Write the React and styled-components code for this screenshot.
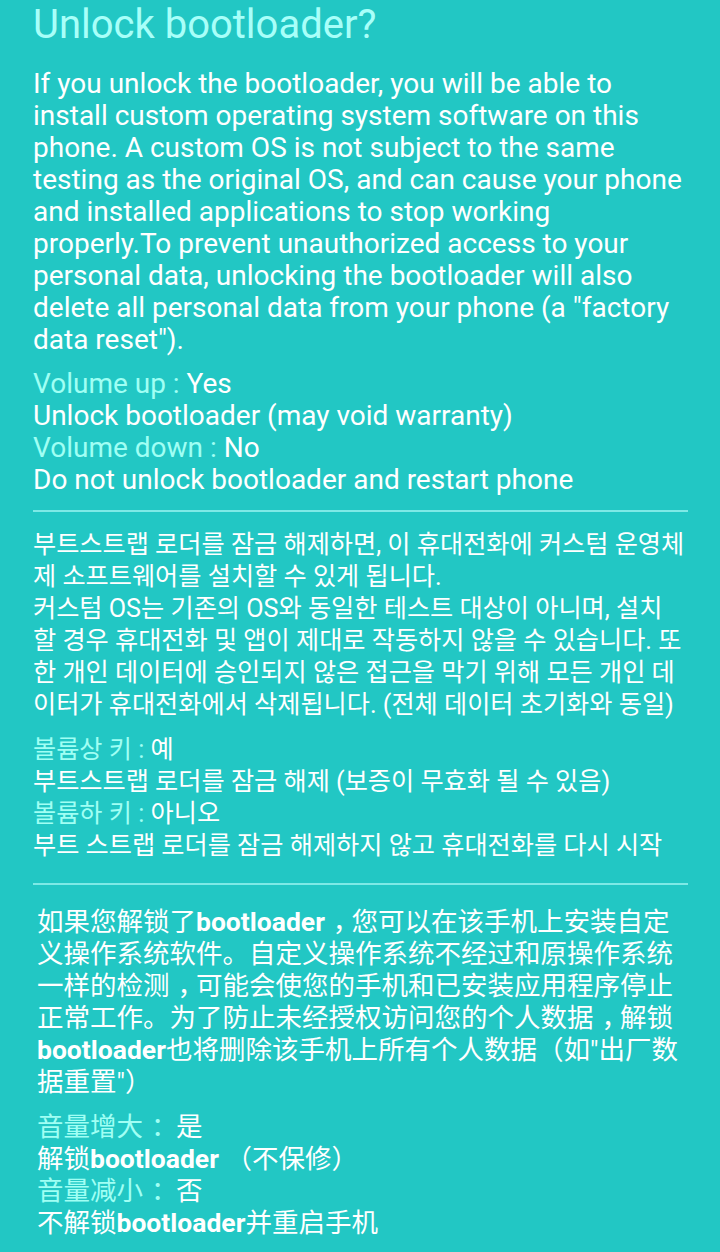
import React from "react";
import styled, { createGlobalStyle } from "styled-components";

const Global = createGlobalStyle`
  html, body { margin: 0; padding: 0; background: #22c7c4; }
  body { font-family: Roboto, "Noto Sans", sans-serif; }
`;

const Page = styled.div`
  width: 720px;
  min-height: 1252px;
  box-sizing: border-box;
  background: #22c7c4;
  padding: 0 32px 0 33px;
  color: #ffffff;
  display: flex;
  flex-direction: column;
`;

const Title = styled.h1`
  margin: 0;
  font-family: Roboto, sans-serif;
  font-weight: 400;
  font-size: 40px;
  line-height: 50px;
  color: #a8fff9;
`;

const Section = styled.section`
  display: flex;
  flex-direction: column;
  padding-top: ${(p) => p.$top || 0}px;
  padding-bottom: ${(p) => p.$bottom || 0}px;
  padding-left: ${(p) => p.$indent || 0}px;
`;

const Paragraph = styled.p`
  margin: 0;
  font-family: ${(p) => p.$font};
  font-size: ${(p) => p.$size}px;
  line-height: 32px;
  color: #ffffff;
  white-space: nowrap;
`;

const Options = styled.div`
  display: flex;
  flex-direction: column;
  margin-top: ${(p) => p.$gap}px;
  font-family: ${(p) => p.$font};
  font-size: ${(p) => p.$size}px;
  line-height: 32px;
  white-space: nowrap;
`;

const Line = styled.div``;

const Label = styled.span`
  color: #a0fff4;
`;

const Bold = styled.b`
  font-family: Roboto, sans-serif;
  font-weight: 700;
`;

/* full-width punctuation centred in its cell, as on the device */
const Punct = styled.span`
  padding-left: 0.3em;
  letter-spacing: -0.3em;
`;

const Divider = styled.hr`
  margin: 0;
  border: none;
  height: 2px;
  background: #7ee9e6;
  width: 655px;
`;

const EN = `Roboto, "Noto Sans", sans-serif`;
const KR = `Roboto, "Noto Sans CJK KR", sans-serif`;
const SC = `Roboto, "Noto Sans CJK SC", sans-serif`;

export default function App() {
  return (
    <>
      <Global />
      <Page>
        <Title>Unlock bootloader?</Title>
        <Section $top={18} $bottom={14}>
          <Paragraph $font={EN} $size={28}>
            If you unlock the bootloader, you will be able to<br />
            install custom operating system software on this<br />
            phone. A custom OS is not subject to the same<br />
            testing as the original OS, and can cause your phone<br />
            and installed applications to stop working<br />
            properly.To prevent unauthorized access to your<br />
            personal data, unlocking the bootloader will also<br />
            delete all personal data from your phone (a "factory<br />
            data reset").
          </Paragraph>
          <Options $gap={12} $font={EN} $size={28}>
            <Line><Label>Volume up : </Label>Yes</Line>
            <Line>Unlock bootloader (may void warranty)</Line>
            <Line><Label>Volume down : </Label>No</Line>
            <Line>Do not unlock bootloader and restart phone</Line>
          </Options>
        </Section>
        <Divider />
        <Section $top={17} $bottom={21}>
          <Paragraph $font={KR} $size={25.2}>
            부트스트랩 로더를 잠금 해제하면, 이 휴대전화에 커스텀 운영체<br />
            제 소프트웨어를 설치할 수 있게 됩니다.<br />
            커스텀 OS는 기존의 OS와 동일한 테스트 대상이 아니며, 설치<br />
            할 경우 휴대전화 및 앱이 제대로 작동하지 않을 수 있습니다. 또<br />
            한 개인 데이터에 승인되지 않은 접근을 막기 위해 모든 개인 데<br />
            이터가 휴대전화에서 삭제됩니다. (전체 데이터 초기화와 동일)
          </Paragraph>
          <Options $gap={13} $font={KR} $size={25.2}>
            <Line><Label>볼륨상 키 : </Label>예</Line>
            <Line>부트스트랩 로더를 잠금 해제 (보증이 무효화 될 수 있음)</Line>
            <Line><Label>볼륨하 키 : </Label>아니오</Line>
            <Line>부트 스트랩 로더를 잠금 해제하지 않고 휴대전화를 다시 시작</Line>
          </Options>
        </Section>
        <Divider />
        <Section $top={21} $indent={4}>
          <Paragraph $font={SC} $size={26.5}>
            如果您解锁了<Bold>bootloader</Bold><Punct>，</Punct>您可以在该手机上安装自定<br />
            义操作系统软件。自定义操作系统不经过和原操作系统<br />
            一样的检测<Punct>，</Punct>可能会使您的手机和已安装应用程序停止<br />
            正常工作。为了防止未经授权访问您的个人数据<Punct>，</Punct>解锁<br />
            <Bold>bootloader</Bold>也将删除该手机上所有个人数据（如"出厂数<br />
            据重置"）
          </Paragraph>
          <Options $gap={13} $font={SC} $size={26.5}>
            <Line><Label>音量增大<Punct>：</Punct> </Label>是</Line>
            <Line>解锁<Bold>bootloader</Bold> （不保修）</Line>
            <Line><Label>音量减小<Punct>：</Punct> </Label>否</Line>
            <Line>不解锁<Bold>bootloader</Bold>并重启手机</Line>
          </Options>
        </Section>
      </Page>
    </>
  );
}
